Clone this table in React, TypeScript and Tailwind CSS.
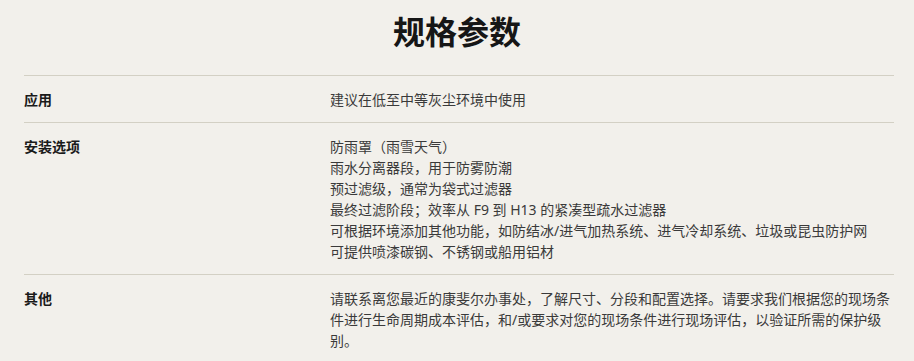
import React from "react";

type Spec = { label: string; lines: string[] };

const specs: Spec[] = [
  { label: "应用", lines: ["建议在低至中等灰尘环境中使用"] },
  {
    label: "安装选项",
    lines: [
      "防雨罩（雨雪天气）",
      "雨水分离器段，用于防雾防潮",
      "预过滤级，通常为袋式过滤器",
      "最终过滤阶段；效率从 F9 到 H13 的紧凑型疏水过滤器",
      "可根据环境添加其他功能，如防结冰/进气加热系统、进气冷却系统、垃圾或昆虫防护网",
      "可提供喷漆碳钢、不锈钢或船用铝材",
    ],
  },
  {
    label: "其他",
    lines: [
      "请联系离您最近的康斐尔办事处，了解尺寸、分段和配置选择。请要求我们根据您的现场条件进行生命周期成本评估，和/或要求对您的现场条件进行现场评估，以验证所需的保护级别。",
    ],
  },
];

export default function App() {
  return (
    <div
      className="min-h-[361px] w-full bg-[#f2f0eb] text-[#1c1c1c]"
      style={{ fontFamily: '"Noto Sans", "Noto Sans CJK SC", sans-serif' }}
    >
      <h1 className="pt-[12px] text-center text-[32px] font-bold leading-[40px] text-[#161616]">
        规格参数
      </h1>
      <div className="mx-[24px] mr-[20px] mt-[23px]">
        {specs.map((s) => (
          <div
            key={s.label}
            className="grid grid-cols-[306px_1fr] border-t border-[#d3d0c4] pt-[13px] pb-3"
          >
            <div className="text-[14px] font-bold leading-[21px] text-[#1a1a1a]">{s.label}</div>
            <div className="pr-[4px] text-[14px] leading-[21px] text-[#3a3a3a]">
              {s.lines.map((l, i) => (
                <div key={i}>{l}</div>
              ))}
            </div>
          </div>
        ))}
      </div>
    </div>
  );
}
